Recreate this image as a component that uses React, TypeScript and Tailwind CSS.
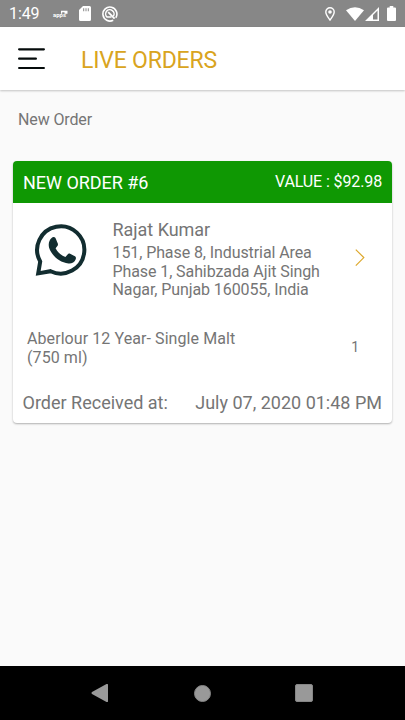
const ORDER = {
  title: 'NEW ORDER #6',
  value: 'VALUE : $92.98',
  customer: 'Rajat Kumar',
  address: ['151, Phase 8, Industrial Area', 'Phase 1, Sahibzada Ajit Singh', 'Nagar, Punjab 160055, India'],
  item: ['Aberlour 12 Year- Single Malt', '(750 ml)'],
  quantity: 1,
  receivedAt: 'July 07, 2020 01:48 PM',
}

function StatusBar() {
  return (
    <div className="flex h-[27px] items-center bg-[#878787] text-white">
      <span className="ml-[9px] w-[44px] pt-[1px] text-[16px] leading-[26px] tracking-[-0.1px]">1:49</span>
      <span className="relative mt-[2px] w-[15px] text-[6px] leading-[8px] font-bold">
        apps
        <svg viewBox="0 0 7 5" className="absolute -top-[1px] left-[8px] h-[5px] w-[7px]" fill="none" stroke="currentColor" strokeWidth="1.4">
          <path d="M.5 3.8V1.5h6M3.5 3h3" />
        </svg>
      </span>
      {/* SD card */}
      <svg viewBox="0 0 12 15" className="ml-[11px] h-[15px] w-[12px]" fill="currentColor">
        <path
          fillRule="evenodd"
          d="M4 0h6.5Q12 0 12 1.5v12q0 1.5-1.5 1.5h-9Q0 15 0 13.5V4zM4.2 2.2v3h1v-3zm2.3 0v3h1v-3zm2.3 0v3h1v-3z"
        />
      </svg>
      {/* sync ring */}
      <svg viewBox="0 0 16 16" className="ml-[11px] size-[16px]" fill="none" stroke="currentColor">
        <path d="M13.8 11.8A7 7 0 1 0 11.2 14.2" strokeWidth="1.6" />
        <path d="M11.4 10.2A4.2 4.2 0 1 0 5.1 11.1H9.5" strokeWidth="1.5" />
        <path d="M6.2 6.2l6.4 6.4" strokeWidth="1.8" />
      </svg>
      <svg viewBox="0 0 10 14" className="ml-auto h-[14px] w-[10px]" fill="none" stroke="currentColor">
        <path d="M5 13C3.2 10.6.8 7.7.8 5a4.2 4.2 0 0 1 8.4 0C9.2 7.7 6.8 10.6 5 13z" strokeWidth="1.4" />
        <circle cx="5" cy="5" r="1.8" fill="currentColor" stroke="none" />
      </svg>
      <svg viewBox="0 0 18 14" className="ml-[11px] h-[14px] w-[18px]" fill="currentColor">
        <path d="M0 3.3Q9-3 18 3.3L9 14z" />
      </svg>
      <svg viewBox="0 0 14 14" className="ml-[1px] h-[14px] w-[14px]" fill="currentColor">
        <path fillRule="evenodd" d="M14 0v14H0zM12.5 3.6L8 8.1v4.5h4.5z" />
      </svg>
      <svg viewBox="0 0 9 15" className="mr-[9px] ml-[8px] h-[15px] w-[9px]" fill="currentColor">
        <path d="M2.7 0h3.6v1.5h1.7q1 0 1 1V14q0 1-1 1H1q-1 0-1-1V2.5q0-1 1-1h1.7z" />
      </svg>
    </div>
  )
}

function Header() {
  return (
    <header className="relative flex h-[63px] items-center bg-white shadow-[0_1px_2px_rgba(0,0,0,0.22)]">
      <svg viewBox="0 0 28 22" className="ml-[18px] h-[22px] w-[28px]" stroke="#050b0b" strokeWidth="2.2" strokeLinecap="round">
        <path d="M1.1 1.3h24.8M1.1 10.7h16.8M1.1 20h24.8" />
      </svg>
      <h1 className="ml-[35px] pt-[3px] text-[23px] leading-[27px] tracking-[-0.2px] text-[#d9a420]">LIVE ORDERS</h1>
    </header>
  )
}

function WhatsAppIcon() {
  return (
    <svg viewBox="0 0 54 54" className="h-[54px] w-[54px]">
      <path
        d="M4.2 50.4L6.2 38.5A23.6 23.6 0 1 1 16.6 48.2z"
        fill="none"
        stroke="#122d30"
        strokeWidth="4"
        strokeLinejoin="miter"
      />
      <path
        d="M17.6 14.9c1.5-1.3 3.4-1 4.1.7l2.1 5c.4 1 .1 1.8-.6 2.7l-1.6 1.9c2.1 4.2 5.4 6.9 9.8 8.9l2.2-2.7c.7-.9 1.5-1.1 2.5-.6l4.9 2.5c1.2.6 1.1 1.8.6 3.3-1 3.1-4.2 4.2-7.1 3.9-9.5-1.2-16.9-8.3-19.4-15.8-1-4 0-7.6 2.5-9.8z"
        fill="#122d30"
      />
    </svg>
  )
}

function OrderCard() {
  return (
    <article className="mx-[13px] h-[262px] overflow-hidden rounded-[4px] bg-white text-[#757575] shadow-[0_1px_2px_rgba(0,0,0,0.3)]">
      <div className="flex h-[42px] items-center justify-between bg-[#0f9803] px-[10px] text-white">
        <h2 className="pt-[1px] text-[18px] tracking-[-0.03px]">{ORDER.title}</h2>
        <span className="pb-[1px] text-[16px] tracking-[-0.12px]">{ORDER.value}</span>
      </div>
      <div className="flex h-[108px] pt-[16px]">
        <div className="ml-[21px] pt-[4px]">
          <WhatsAppIcon />
        </div>
        <div className="ml-[24.5px] flex-1">
          <p className="text-[18px] leading-[22px] tracking-[-0.03px]">{ORDER.customer}</p>
          <div className="pt-[3px] text-[16px] leading-[18.5px] tracking-[-0.09px]">
            {ORDER.address.map((line) => (
              <p key={line} className="whitespace-nowrap">{line}</p>
            ))}
          </div>
        </div>
        <svg viewBox="0 0 10 18" className="mt-[30px] mr-[27px] h-[18px] w-[10px]" fill="none" stroke="#dda72a" strokeWidth="1.2">
          <path d="M.8.6l8 8-8 8" />
        </svg>
      </div>
      <div className="flex h-[73px] items-center justify-between pr-[33px] pl-[14px]">
        <div className="text-[16px] leading-[19px] tracking-[0.08px]">
          {ORDER.item.map((line) => (
            <p key={line}>{line}</p>
          ))}
        </div>
        <span className="text-[14px]">{ORDER.quantity}</span>
      </div>
      <div className="flex h-[37px] items-center justify-between pr-[10px] pl-[9.5px] text-[18px]">
        <span>Order Received at:</span>
        <span>{ORDER.receivedAt}</span>
      </div>
    </article>
  )
}

function NavigationBar() {
  return (
    <nav className="flex h-[54px] items-center bg-black text-[#999]">
      <svg viewBox="0 0 17 18" className="ml-[91px] h-[18px] w-[17px]" fill="currentColor">
        <path d="M15.5 0q1.5-.5 1.5 1v16q0 1.5-1.5 1L1 10Q0 9 1 8z" />
      </svg>
      <span className="ml-[86px] size-[17px] rounded-full border border-[#858585] bg-[#999]" />
      <span className="ml-[84px] size-[18px] rounded-[2px] border border-[#858585] bg-[#999]" />
    </nav>
  )
}

export default function App() {
  return (
    <div className="flex h-[720px] w-[405px] flex-col overflow-hidden bg-[#fafafa] font-['Roboto',sans-serif]">
      <StatusBar />
      <Header />
      <main className="flex-1">
        <p className="mt-[20px] mb-[31px] ml-[18px] text-[16px] leading-[20px] tracking-[-0.12px] text-[#757575]">New Order</p>
        <OrderCard />
      </main>
      <NavigationBar />
    </div>
  )
}
